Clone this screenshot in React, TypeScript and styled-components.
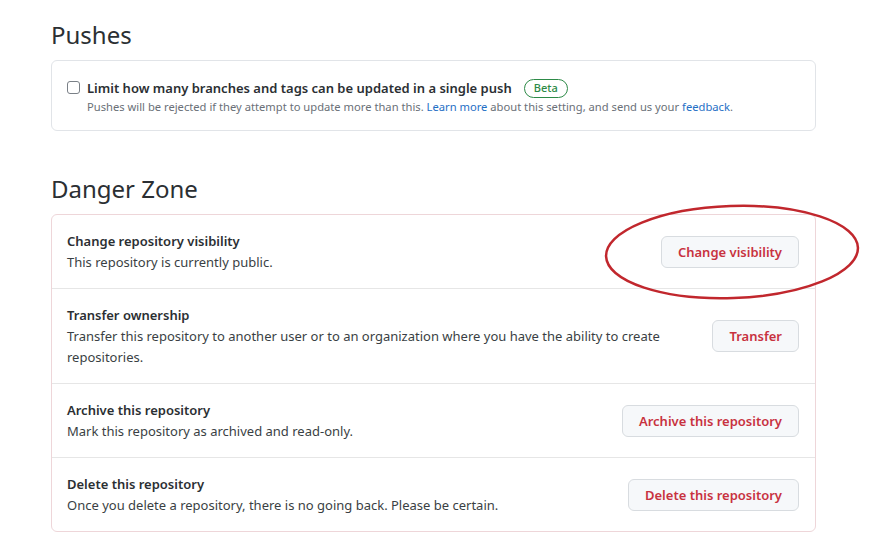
import React from "react";
import styled, { createGlobalStyle } from "styled-components";

const Global = createGlobalStyle`
  html, body { margin: 0; padding: 0; background: #ffffff; }
  body { font-family: "Noto Sans", "Open Sans", sans-serif; color: #24292f; }
  * { box-sizing: border-box; }
`;

const Page = styled.div`
  position: relative;
  width: 878px;
  height: 552px;
  padding: 17px 62px 0 51px;
  overflow: hidden;
`;

const Heading = styled.h2<{ $top?: number }>`
  margin: ${(p) => p.$top ?? 0}px 0 7px;
  font-size: 24px;
  line-height: 36px;
  font-weight: 400;
  color: #2b2f33;
`;

const Box = styled.div<{ $danger?: boolean }>`
  border: 1px solid ${(p) => (p.$danger ? "#eed6d9" : "#e1e4e8")};
  border-radius: 6px;
  background: #fff;
`;

const PushBody = styled.div`
  padding: 16px 15px 15px;
  display: flex;
  gap: 7px;
  align-items: flex-start;
`;

const Check = styled.input`
  appearance: none;
  margin: 4px 0 0;
  width: 13px;
  height: 13px;
  border: 1px solid #7a8087;
  border-radius: 3px;
  background: #fff;
  flex: none;
`;

const LabelCol = styled.div`
  display: flex;
  flex-direction: column;
`;

const LabelRow = styled.div`
  display: flex;
  align-items: center;
  gap: 12px;
  font-size: 13px;
  line-height: 22px;
  font-weight: 600;
  color: #2b2f33;
`;

const Badge = styled.span`
  display: inline-flex;
  align-items: center;
  height: 19px;
  padding: 0 9px;
  border: 1px solid #2d8a47;
  border-radius: 10px;
  color: #2d8a47;
  font-size: 11px;
  font-weight: 500;
`;

const Note = styled.div`
  font-size: 11.2px;
  line-height: 16px;
  color: #6a7077;
`;

const Link = styled.a`
  color: #1f6fc5;
  text-decoration: none;
`;

const Row = styled.div<{ $last?: boolean }>`
  display: flex;
  align-items: center;
  justify-content: space-between;
  gap: 24px;
  padding: 15px 16px 15px 15px;
  border-bottom: ${(p) => (p.$last ? "none" : "1px solid #e6e6e6")};
`;

const RowText = styled.div`
  flex: 1;
  font-size: 13px;
  line-height: 21px;
  color: #3a3f44;
`;

const RowTitle = styled.div`
  font-weight: 600;
  line-height: 22px;
  color: #2b2f33;
`;

const DangerButton = styled.button`
  flex: none;
  height: 32px;
  padding: 0 16px;
  border: 1px solid #d8dce0;
  border-radius: 6px;
  background: #f6f8fa;
  color: #c8323f;
  font-family: inherit;
  font-size: 13px;
  font-weight: 600;
`;

const Circle = styled.svg`
  position: absolute;
  left: 600px;
  top: 200px;
  pointer-events: none;
`;

const rows = [
  {
    title: "Change repository visibility",
    desc: "This repository is currently public.",
    button: "Change visibility",
  },
  {
    title: "Transfer ownership",
    desc: "Transfer this repository to another user or to an organization where you have the ability to create repositories.",
    button: "Transfer",
  },
  {
    title: "Archive this repository",
    desc: "Mark this repository as archived and read-only.",
    button: "Archive this repository",
  },
  {
    title: "Delete this repository",
    desc: "Once you delete a repository, there is no going back. Please be certain.",
    button: "Delete this repository",
  },
];

export default function App() {
  return (
    <>
      <Global />
      <Page>
        <Heading>Pushes</Heading>
        <Box>
          <PushBody>
            <Check type="checkbox" />
            <LabelCol>
              <LabelRow>
                Limit how many branches and tags can be updated in a single push
                <Badge>Beta</Badge>
              </LabelRow>
              <Note>
                Pushes will be rejected if they attempt to update more than this.{" "}
                <Link href="#">Learn more</Link> about this setting, and send us your{" "}
                <Link href="#">feedback</Link>.
              </Note>
            </LabelCol>
          </PushBody>
        </Box>
        <Heading $top={40}>Danger Zone</Heading>
        <Box $danger>
          {rows.map((r, i) => (
            <Row key={r.title} $last={i === rows.length - 1}>
              <RowText>
                <RowTitle>{r.title}</RowTitle>
                {r.desc}
              </RowText>
              <DangerButton>{r.button}</DangerButton>
            </Row>
          ))}
        </Box>
        <Circle width="270" height="110" viewBox="0 0 270 110">
          <ellipse
            cx="132"
            cy="52"
            rx="126"
            ry="46"
            fill="none"
            stroke="#c1272d"
            strokeWidth="2.5"
            transform="rotate(-2 132 52)"
          />
        </Circle>
      </Page>
    </>
  );
}
